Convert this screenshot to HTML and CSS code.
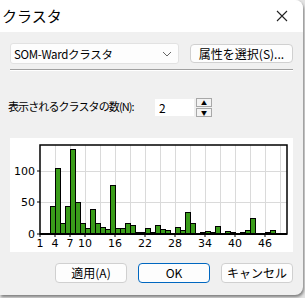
FILE: index.html
```html
<!DOCTYPE html>
<html lang="ja">
<head>
    <meta charset="UTF-8">
    <title>クラスタ</title>
    <link rel="stylesheet" href="styles.css">
</head>
<body>
    <div class="window">
        <div class="titlebar">
            <span class="title">クラスタ</span>
            <svg class="close" width="12" height="12" viewBox="0 0 12 12">
                <path d="M1 1 L11 11 M11 1 L1 11" stroke="#222" stroke-width="1.1" fill="none"/>
            </svg>
        </div>

        <div class="content">
            <div class="row-top">
                <div class="combo">
                    <span>SOM-Wardクラスタ</span>
                    <svg width="10" height="6" viewBox="0 0 10 6">
                        <path d="M1 1 L5 5 L9 1" stroke="#666" stroke-width="1" fill="none"/>
                    </svg>
                </div>
                <button class="btn btn-attr">属性を選択(S)...</button>
            </div>

            <div class="separator"></div>

            <div class="row-count">
                <label for="countInput">表示されるクラスタの数(N):</label>
                <input type="text" id="countInput" class="count-input" value="2">
                <div class="spin">
                    <span class="spin-btn">&#9650;</span>
                    <span class="spin-btn">&#9660;</span>
                </div>
            </div>

            <div class="chart-panel">
                <svg id="chart" width="283" height="114" viewBox="0 0 283 114"></svg>
            </div>

            <div class="row-buttons">
                <button class="btn">適用(A)</button>
                <button class="btn btn-ok">OK</button>
                <button class="btn">キャンセル</button>
            </div>
        </div>
    </div>

    <script>
        // ヒストグラムの値 (1..50)
        const values = [0, 0, 45, 105, 17, 44, 134, 50, 17, 9,
                        39, 17, 11, 8, 77, 9, 9, 17, 15, 3,
                        3, 9, 3, 14, 8, 6, 2, 11, 6, 34,
                        17, 1, 3, 4, 3, 12, 1, 4, 3, 0,
                        3, 6, 26, 1, 1, 3, 6, 1, 0, 0];

        const svg = document.getElementById('chart');
        const NS = 'http://www.w3.org/2000/svg';
        const plotLeft = 30, plotRight = 277, plotTop = 7, plotBottom = 96;
        const unit = 5, scale = 0.633;

        function add(tag, attrs, text) {
            const el = document.createElementNS(NS, tag);
            for (const k in attrs) el.setAttribute(k, attrs[k]);
            if (text !== undefined) el.textContent = text;
            svg.appendChild(el);
            return el;
        }

        // グリッド
        for (let k = 4; k <= 50; k += 3) {
            const x = plotLeft + (k - 1) * unit + 0.5;
            add('line', { x1: x, y1: plotTop, x2: x, y2: plotBottom, stroke: '#dadada', 'stroke-width': 1 });
        }
        [50, 100].forEach(v => {
            const y = Math.round(plotBottom - v * scale) + 0.5;
            add('line', { x1: plotLeft, y1: y, x2: plotRight, y2: y, stroke: '#dadada', 'stroke-width': 1 });
        });

        // 棒
        values.forEach((v, i) => {
            const h = Math.round(v * scale);
            const x = plotLeft + i * unit + 0.5;
            add('rect', { x: x, y: plotBottom - h + 0.5, width: unit, height: h, fill: '#3a9c1a', stroke: '#000', 'stroke-width': 1 });
        });

        // 枠
        add('rect', { x: plotLeft, y: plotTop, width: plotRight - plotLeft, height: plotBottom - plotTop, fill: 'none', stroke: '#000', 'stroke-width': 1.5 });
        add('line', { x1: plotLeft, y1: plotBottom, x2: plotRight, y2: plotBottom, stroke: '#000', 'stroke-width': 2 });

        // Y軸ラベル
        [0, 50, 100].forEach(v => {
            const y = Math.round(plotBottom - v * scale);
            add('line', { x1: plotLeft - 3, y1: y, x2: plotLeft, y2: y, stroke: '#000', 'stroke-width': 1 });
            add('text', { x: plotLeft - 5, y: y + 4, 'text-anchor': 'end', class: 'axis-label' }, v);
        });

        // X軸ラベル
        [1, 4, 7, 10, 16, 22, 28, 34, 40, 46].forEach(k => {
            const x = plotLeft + (k - 1) * unit;
            add('line', { x1: x, y1: plotBottom, x2: x, y2: plotBottom + 3, stroke: '#000', 'stroke-width': 1 });
            add('text', { x: x, y: plotBottom + 13, 'text-anchor': 'middle', class: 'axis-label' }, k);
        });
    </script>
</body>
</html>
```

FILE: styles.css
```css
html, body {
    margin: 0;
    padding: 0;
}
body {
    width: 305px;
    height: 298px;
    background-color: #e4e4e4;
    font-family: 'Noto Sans CJK JP', 'Noto Sans', sans-serif;
    font-size: 12px;
    color: #000;
    overflow: hidden;
}
.window {
    width: 303px;
    height: 295px;
    background-color: #f0f0f0;
    border-radius: 0 8px 8px 0;
    box-shadow: 1px 2px 3px rgba(0, 0, 0, 0.45);
    overflow: hidden;
}
.titlebar {
    height: 32px;
    background-color: #fff;
    display: flex;
    align-items: center;
    justify-content: space-between;
    padding: 0 15px 0 2px;
}
.title {
    font-size: 15px;
    line-height: 20px;
}
.content {
    padding: 11px 10px 0 10px;
}
.row-top {
    display: flex;
    align-items: center;
    justify-content: space-between;
    height: 21px;
}
.combo {
    width: 160px;
    height: 19px;
    padding: 0 4px 0 3px;
    background-color: #fdfdfd;
    border: 1px solid #e2e2e2;
    border-radius: 3px;
    display: flex;
    align-items: center;
    justify-content: space-between;
    font-size: 11.5px;
    letter-spacing: -0.3px;
}
.combo svg {
    margin-right: 2px;
}
.btn {
    font-family: 'Noto Sans CJK JP', 'Noto Sans', sans-serif;
    font-size: 12px;
    line-height: 16px;
    color: #000;
    background-color: #fdfdfd;
    border: 1px solid #d0d0d0;
    border-radius: 4px;
    height: 20px;
    padding: 0;
    cursor: pointer;
}
.btn-attr {
    width: 103px;
    height: 19px;
}
.separator {
    height: 1px;
    margin-top: 5px;
    background-color: #a0a0a0;
    border-bottom: 1px solid #fff;
}
.row-count {
    display: flex;
    align-items: center;
    margin-top: 27px;
    height: 18px;
}
.row-count label {
    width: 147px;
    margin-left: -2px;
    padding-bottom: 2px;
    font-size: 11px;
    letter-spacing: -0.9px;
    white-space: nowrap;
}
.count-input {
    width: 35px;
    height: 17px;
    margin: 0;
    padding: 0 0 0 4px;
    border: none;
    font-family: 'Noto Sans CJK JP', 'Noto Sans', sans-serif;
    font-size: 12px;
    background-color: #fff;
}
.spin {
    display: flex;
    flex-direction: column;
    margin-left: 2px;
    gap: 1px;
}
.spin-btn {
    width: 14px;
    height: 7px;
    border: 1px solid #a8a8a8;
    background-color: #f3f3f3;
    font-size: 6px;
    line-height: 7px;
    text-align: center;
    color: #000;
}
.chart-panel {
    margin-top: 22px;
    width: 283px;
    height: 114px;
    background-color: #fff;
}
.chart-panel svg {
    display: block;
}
.axis-label {
    font-family: 'DejaVu Sans', sans-serif;
    font-size: 11px;
    fill: #000;
}
.row-buttons {
    display: flex;
    justify-content: flex-end;
    gap: 11px;
    margin-top: 11px;
    padding-right: 0;
}
.row-buttons .btn {
    width: 72px;
}
.btn-ok {
    border-color: #0067c0;
}
```
